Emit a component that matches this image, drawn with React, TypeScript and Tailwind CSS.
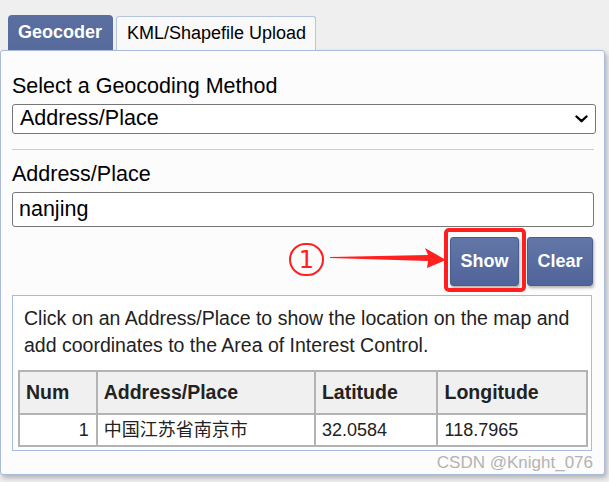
import React from "react";

/*
  Geocoder panel — tab strip, method select, address input, Show/Clear
  buttons and a results table. The red marks (①, arrow, box) are a
  screenshot annotation laid over the page.
*/
type Result = { num: number; place: string; lat: string; lng: string };

const RESULTS: Result[] = [{ num: 1, place: "中国江苏省南京市", lat: "32.0584", lng: "118.7965" }];

const btn =
  "flex h-[49px] items-center justify-center rounded-[3px] border border-[#4a5d8c] bg-gradient-to-b from-[#6276a6] to-[#50649a] text-[18px] font-bold text-white shadow-[1px_2px_3px_rgba(0,0,0,0.3)]";

export default function App() {
  return (
    <div className="relative h-[482px] w-[609px] overflow-hidden bg-[#efefef] font-['Liberation_Sans','Noto_Sans_CJK_SC',Arial,sans-serif] text-black">
      {/* Tabs */}
      <div className="flex h-[50px] items-end gap-[3px] pl-[8px]">
        <div className="flex h-[35px] w-[105px] items-center rounded-t-[4px] bg-gradient-to-b from-[#5a6e9f] to-[#566a9c] pl-[10px] text-[18px] font-bold text-white">
          Geocoder
        </div>
        <div className="flex h-[34px] w-[200px] items-center rounded-t-[3px] border border-b-0 border-[#b6c5e0] bg-[#f9f9f9] pl-[10px] text-[18px]">
          KML/Shapefile Upload
        </div>
      </div>

      {/* Panel */}
      <div className="h-[425px] w-[605px] rounded-[3px] border border-[#a9bbd9] bg-[#fcfcfc] pl-[11px] pr-[9px] pt-[23px] shadow-[2px_3px_5px_rgba(0,0,0,0.25)]">
        <div className="text-[21.5px] leading-[25px]">Select a Geocoding Method</div>
        <div className="mt-[5px] flex h-[30px] w-[584px] items-center justify-between rounded-[3px] border border-[#767676] bg-white pb-[1px] pl-[7px] pr-[7px]">
          <span className="text-[21.5px] leading-[25px]">Address/Place</span>
          <svg width="13" height="8" viewBox="0 0 13 8" fill="none" stroke="#000" strokeWidth="2.4" strokeLinecap="round" strokeLinejoin="round">
            <path d="M1.5 1.5 6.5 6.2 11.5 1.5" />
          </svg>
        </div>

        <div className="mt-[15px] h-px w-[582px] bg-[#cccccc]" />

        <div className="mt-[12px] text-[21.5px] leading-[25px]">Address/Place</div>
        <div className="mt-[5px] flex h-[35px] w-[582px] items-center rounded-[3px] border border-[#767676] bg-white pb-[1px] pl-[6px] text-[21.5px] leading-[25px]">
          nanjing
        </div>

        <div className="mt-[10px] flex w-[581px] justify-end gap-[8px]">
          <button className={`${btn} w-[69px]`}>Show</button>
          <button className={`${btn} w-[66px]`}>Clear</button>
        </div>

        {/* Results */}
        <div className="mt-[9px] h-[156px] w-[580px] border border-[#a9bbd9] bg-white pl-[11px] pt-[9px]">
          <p className="text-[19.5px] leading-[27px] text-[#222]">
            Click on an Address/Place to show the location on the map and add coordinates to the Area of Interest Control.
          </p>
          <table className="-ml-[6px] mt-[11px] w-[570px] border-collapse border-2 border-[#b3b3b3] text-[#222]">
            <thead>
              <tr className="h-[43px] bg-[#f0f0f0] text-left text-[19.5px] font-bold">
                <th className="w-[78px] border-2 border-[#b3b3b3] pl-[6px]">Num</th>
                <th className="w-[219px] border-2 border-[#b3b3b3] pl-[6px]">Address/Place</th>
                <th className="w-[123px] border-2 border-[#b3b3b3] pl-[6px]">Latitude</th>
                <th className="w-[150px] border-2 border-[#b3b3b3] pl-[6px]">Longitude</th>
              </tr>
            </thead>
            <tbody>
              {RESULTS.map((r) => (
                <tr key={r.num} className="h-[32px] bg-white text-[18px]">
                  <td className="border-2 border-[#b3b3b3] pr-[7px] text-right">{r.num}</td>
                  <td className="border-2 border-[#b3b3b3] pl-[6px]">{r.place}</td>
                  <td className="border-2 border-[#b3b3b3] pl-[6px]">{r.lat}</td>
                  <td className="border-2 border-[#b3b3b3] pl-[6px]">{r.lng}</td>
                </tr>
              ))}
            </tbody>
          </table>
        </div>

        <div className="mr-[2px] mt-[2px] text-right text-[17px] leading-[20px] text-[#b3b3b3]">CSDN @Knight_076</div>
      </div>

      {/* Annotation */}
      <div className="absolute left-[289px] top-[243px] flex h-[33px] w-[35px] items-center justify-center rounded-full border-2 border-[#ff2020] font-['DejaVu_Sans',sans-serif] text-[24px] leading-none text-[#ff2020]">
        1
      </div>
      <svg className="absolute left-[328px] top-[245px]" width="122" height="30" viewBox="0 0 122 30">
        <polygon points="2,12 100,10 97,3 118,15 99,23 100,16 2,13" fill="#ff2020" />
      </svg>
      <div className="absolute left-[444px] top-[228px] h-[64px] w-[82px] rounded-[5px] border-4 border-[#ff1f1f]" />
    </div>
  );
}
